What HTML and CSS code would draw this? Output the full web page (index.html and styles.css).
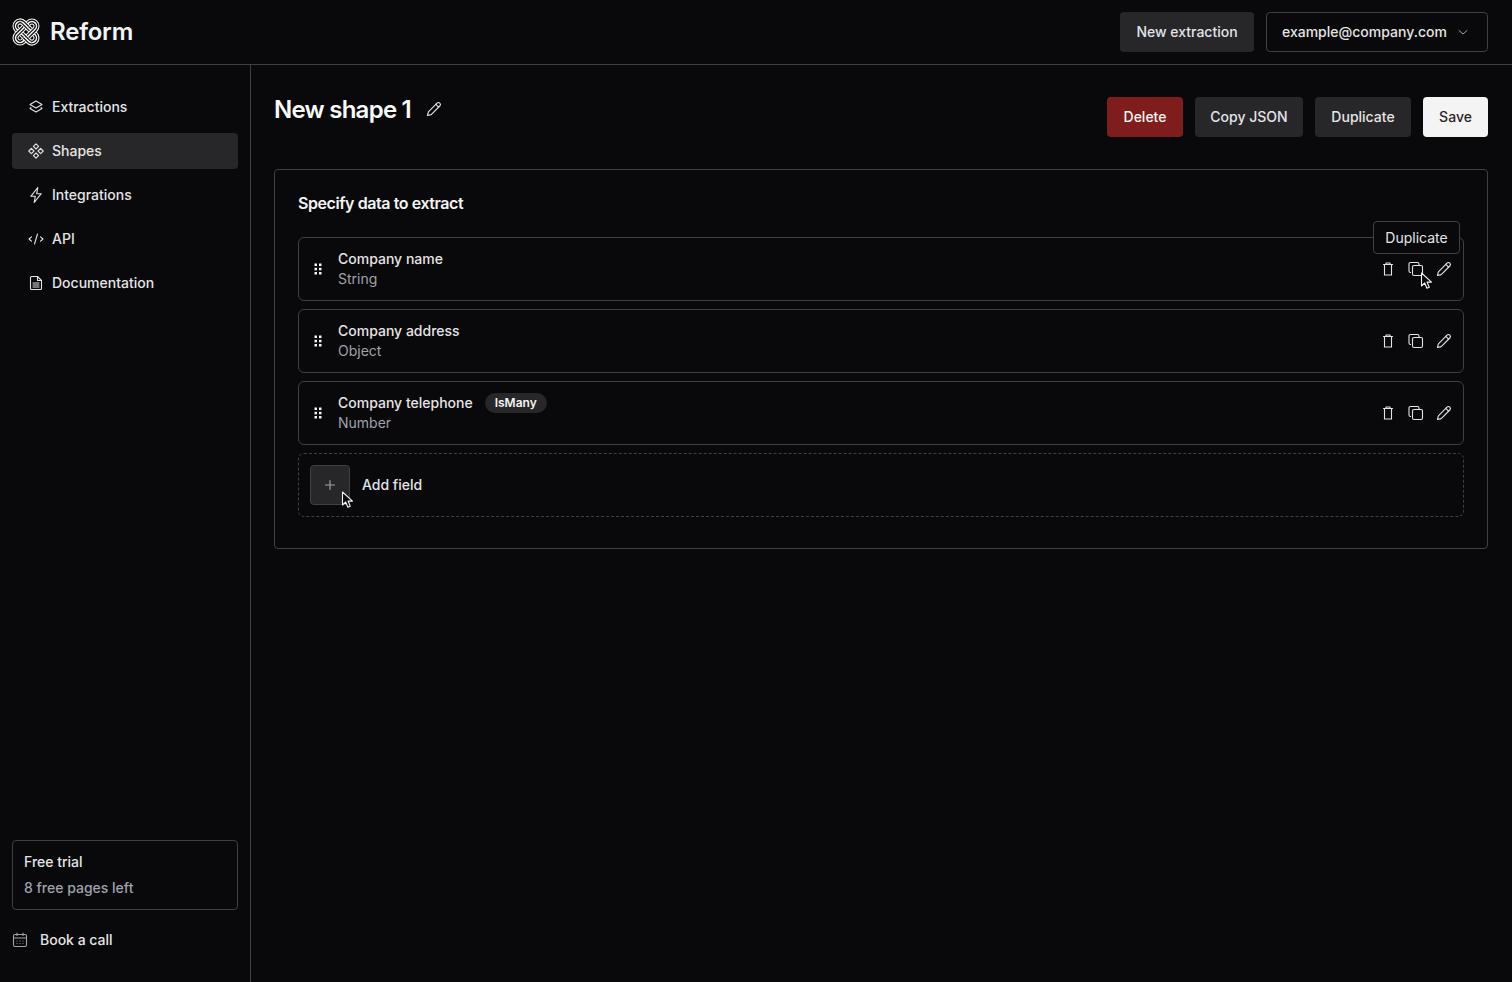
FILE: index.html
```html
<!DOCTYPE html>
<html lang="en">
<head>
<meta charset="utf-8">
<title>Reform</title>
<link rel="stylesheet" href="styles.css">
</head>
<body>
<header class="topbar">
  <div class="brand">
    <svg class="logo" viewBox="1 1 26 26" fill="none">
      <defs>
        <path id="loop-a" d="M11.500 5.500 22.500 16.500A4.240 4.240 0 0 1 16.500 22.500L5.500 11.500A4.240 4.240 0 0 1 11.500 5.500Z"/>
        <path id="loop-b" d="M16.500 5.500 5.500 16.500A4.240 4.240 0 0 0 11.500 22.500L22.500 11.500A4.240 4.240 0 0 0 16.500 5.500Z"/>
        <g id="band-a"><use href="#loop-a" class="band-1"/><use href="#loop-a" class="band-2"/><use href="#loop-a" class="band-3"/></g>
        <g id="band-b"><use href="#loop-b" class="band-1"/><use href="#loop-b" class="band-2"/><use href="#loop-b" class="band-3"/></g>
        <clipPath id="weave"><path d="M7 0H21L14 14ZM7 28H21L14 14Z"/></clipPath>
      </defs>
      <use href="#band-a"/>
      <use href="#band-b"/>
      <g clip-path="url(#weave)"><use href="#band-a"/></g>
    </svg>
    <span class="brand-name">Reform</span>
  </div>
  <div class="top-actions">
    <button class="btn btn-muted btn-new">New extraction</button>
    <button class="account">
      <span>example@company.com</span>
      <svg class="chevron" viewBox="0 0 16 16" fill="none" stroke="#a1a1aa" stroke-width="1" stroke-linecap="round" stroke-linejoin="round"><path d="m4 6.500 4 3.500 4-3.500"/></svg>
    </button>
  </div>
</header>

<div class="shell">
  <aside class="sidebar">
    <nav class="nav">
      <a class="nav-item">
        <svg class="nav-icon" viewBox="0 0 16 16" fill="none" stroke="currentColor" stroke-width="1.100" stroke-linejoin="round"><path d="M8 2 14 5.500 8 9 2 5.500Z"/><path d="M3.300 8.500 2 9.500 8 13l6-3.500-1.300-1"/></svg>
        <span>Extractions</span>
      </a>
      <a class="nav-item nav-active">
        <svg class="nav-icon" viewBox="0 0 16 16" fill="none" stroke="currentColor" stroke-width="1.100" stroke-linejoin="round"><path d="M8 .8 10.600 3.400 8 6 5.400 3.400Z"/><path d="M3.400 5.400 6 8 3.400 10.600.8 8Z"/><path d="M12.600 5.400 15.200 8 12.600 10.600 10 8Z"/><path d="M8 10 10.600 12.600 8 15.200 5.400 12.600Z"/></svg>
        <span>Shapes</span>
      </a>
      <a class="nav-item">
        <svg class="nav-icon" viewBox="0 0 16 16" fill="none" stroke="currentColor" stroke-width="1.100" stroke-linejoin="round"><path d="M9.800 .5 2.800 9.300h4.500l-1.100 6.200 7-8.800H8.700Z"/></svg>
        <span>Integrations</span>
      </a>
      <a class="nav-item">
        <svg class="nav-icon" viewBox="0 0 16 16" fill="none" stroke="currentColor" stroke-width="1.100" stroke-linecap="round" stroke-linejoin="round"><path d="M3.500 5.800 1 8 3.500 10.200"/><path d="M12.500 5.800 15 8 12.500 10.200"/><path d="M9.500 3 6.500 13"/></svg>
        <span>API</span>
      </a>
      <a class="nav-item">
        <svg class="nav-icon" viewBox="0 0 16 16" fill="none" stroke="currentColor" stroke-width="1.100" stroke-linecap="round" stroke-linejoin="round"><path d="M9.500 1.500H3.500a1 1 0 0 0-1 1v11a1 1 0 0 0 1 1h9a1 1 0 0 0 1-1V5.500Z"/><path d="M9.500 1.500v4h4"/><path d="M5 8h6M5 10h6M5 12h6"/></svg>
        <span>Documentation</span>
      </a>
    </nav>
    <div class="side-bottom">
      <div class="trial">
        <div class="trial-title">Free trial</div>
        <div class="trial-sub">8 free pages left</div>
      </div>
      <a class="book">
        <svg class="book-icon" viewBox="0 0 16 16" fill="none" stroke="#a1a1aa" stroke-width="1.100" stroke-linecap="round"><rect x="1.500" y="2.500" width="13" height="12" rx="1.500"/><path d="M1.500 6h13M5 1v2.500M11 1v2.500"/><path d="M5 9h.01M8 9h.01M11 9h.01M5 11.500h.01M8 11.500h.01M11 11.500h.01"/></svg>
        <span>Book a call</span>
      </a>
    </div>
  </aside>

  <main class="main">
    <div class="page-head">
      <div class="title-wrap">
        <h1 class="title">New shape 1</h1>
        <svg class="title-edit" viewBox="0 0 16 16" fill="none" stroke="#e4e4e7" stroke-width="1.100" stroke-linejoin="round" stroke-linecap="round"><path d="M1.500 14.500l.9-3.700L11 2.200a1.700 1.700 0 0 1 2.800 2.800l-8.600 8.600Z"/><path d="M9.800 3.400l2.800 2.800"/></svg>
      </div>
      <div class="page-actions">
        <button class="btn btn-danger">Delete</button>
        <button class="btn btn-muted btn-copy">Copy JSON</button>
        <button class="btn btn-muted btn-dup">Duplicate</button>
        <button class="btn btn-light">Save</button>
      </div>
    </div>

    <section class="card">
      <h2 class="card-title">Specify data to extract</h2>
      <div class="fields">
        <div class="field">
          <svg class="grip" viewBox="0 0 8 12" fill="#f4f4f5"><rect x="0.500" y="0.500" width="2.500" height="2.500"/><rect x="5" y="0.500" width="2.500" height="2.500"/><rect x="0.500" y="4.800" width="2.500" height="2.500"/><rect x="5" y="4.800" width="2.500" height="2.500"/><rect x="0.500" y="9" width="2.500" height="2.500"/><rect x="5" y="9" width="2.500" height="2.500"/></svg>
          <div class="field-text">
            <div class="field-name"><span>Company name</span></div>
            <div class="field-type">String</div>
          </div>
          <div class="field-actions">
            <svg class="act" viewBox="0 0 16 16" fill="none" stroke="#e4e4e7" stroke-width="1.100" stroke-linecap="round" stroke-linejoin="round"><path d="M3.500 3.500h9M6 3.500V2h4v1.500M4.500 3.500v10.500h7V3.500"/></svg>
            <svg class="act" viewBox="0 0 16 16" fill="none" stroke="#e4e4e7" stroke-width="1.100" stroke-linejoin="round"><path d="M3 11.500H2.500a1.500 1.500 0 0 1-1.500-1.500V3a1.500 1.500 0 0 1 1.500-1.500h7A1.500 1.500 0 0 1 11 3v1.500"/><rect x="4.500" y="4.500" width="10" height="10" rx="1.500"/></svg>
            <svg class="act" viewBox="0 0 16 16" fill="none" stroke="#e4e4e7" stroke-width="1.100" stroke-linejoin="round" stroke-linecap="round"><path d="M1.500 14.500l.9-3.700L11 2.200a1.700 1.700 0 0 1 2.800 2.800l-8.600 8.600Z"/><path d="M9.800 3.400l2.800 2.800"/></svg>
          </div>
          <div class="tooltip">Duplicate</div>
          <svg class="cursor cursor-dup" viewBox="0 0 14 18"><path d="M1.500 1v13l3.200-3 2.200 5.200 2.400-1-2.200-5.100h4.400Z" fill="#0b0b0d" stroke="#f4f4f5" stroke-width="1.100" stroke-linejoin="round"/></svg>
        </div>
        <div class="field">
          <svg class="grip" viewBox="0 0 8 12" fill="#f4f4f5"><rect x="0.500" y="0.500" width="2.500" height="2.500"/><rect x="5" y="0.500" width="2.500" height="2.500"/><rect x="0.500" y="4.800" width="2.500" height="2.500"/><rect x="5" y="4.800" width="2.500" height="2.500"/><rect x="0.500" y="9" width="2.500" height="2.500"/><rect x="5" y="9" width="2.500" height="2.500"/></svg>
          <div class="field-text">
            <div class="field-name"><span>Company address</span></div>
            <div class="field-type">Object</div>
          </div>
          <div class="field-actions">
            <svg class="act" viewBox="0 0 16 16" fill="none" stroke="#e4e4e7" stroke-width="1.100" stroke-linecap="round" stroke-linejoin="round"><path d="M3.500 3.500h9M6 3.500V2h4v1.500M4.500 3.500v10.500h7V3.500"/></svg>
            <svg class="act" viewBox="0 0 16 16" fill="none" stroke="#e4e4e7" stroke-width="1.100" stroke-linejoin="round"><path d="M3 11.500H2.500a1.500 1.500 0 0 1-1.500-1.500V3a1.500 1.500 0 0 1 1.500-1.500h7A1.500 1.500 0 0 1 11 3v1.500"/><rect x="4.500" y="4.500" width="10" height="10" rx="1.500"/></svg>
            <svg class="act" viewBox="0 0 16 16" fill="none" stroke="#e4e4e7" stroke-width="1.100" stroke-linejoin="round" stroke-linecap="round"><path d="M1.500 14.500l.9-3.700L11 2.200a1.700 1.700 0 0 1 2.800 2.800l-8.600 8.600Z"/><path d="M9.800 3.400l2.800 2.800"/></svg>
          </div>
        </div>
        <div class="field">
          <svg class="grip" viewBox="0 0 8 12" fill="#f4f4f5"><rect x="0.500" y="0.500" width="2.500" height="2.500"/><rect x="5" y="0.500" width="2.500" height="2.500"/><rect x="0.500" y="4.800" width="2.500" height="2.500"/><rect x="5" y="4.800" width="2.500" height="2.500"/><rect x="0.500" y="9" width="2.500" height="2.500"/><rect x="5" y="9" width="2.500" height="2.500"/></svg>
          <div class="field-text">
            <div class="field-name"><span>Company telephone</span><span class="badge">IsMany</span></div>
            <div class="field-type">Number</div>
          </div>
          <div class="field-actions">
            <svg class="act" viewBox="0 0 16 16" fill="none" stroke="#e4e4e7" stroke-width="1.100" stroke-linecap="round" stroke-linejoin="round"><path d="M3.500 3.500h9M6 3.500V2h4v1.500M4.500 3.500v10.500h7V3.500"/></svg>
            <svg class="act" viewBox="0 0 16 16" fill="none" stroke="#e4e4e7" stroke-width="1.100" stroke-linejoin="round"><path d="M3 11.500H2.500a1.500 1.500 0 0 1-1.500-1.500V3a1.500 1.500 0 0 1 1.500-1.500h7A1.500 1.500 0 0 1 11 3v1.500"/><rect x="4.500" y="4.500" width="10" height="10" rx="1.500"/></svg>
            <svg class="act" viewBox="0 0 16 16" fill="none" stroke="#e4e4e7" stroke-width="1.100" stroke-linejoin="round" stroke-linecap="round"><path d="M1.500 14.500l.9-3.700L11 2.200a1.700 1.700 0 0 1 2.800 2.800l-8.600 8.600Z"/><path d="M9.800 3.400l2.800 2.800"/></svg>
          </div>
        </div>
        <div class="add-field">
          <span class="add-btn">
            <svg class="plus" viewBox="0 0 12 12" fill="none" stroke="#a1a1aa" stroke-width="1.100" stroke-linecap="round"><path d="M6 1.500v9M1.500 6h9"/></svg>
          </span>
          <span class="add-label">Add field</span>
          <svg class="cursor cursor-add" viewBox="0 0 14 18"><path d="M1.500 1v13l3.200-3 2.200 5.200 2.400-1-2.200-5.100h4.400Z" fill="#0b0b0d" stroke="#f4f4f5" stroke-width="1.100" stroke-linejoin="round"/></svg>
        </div>
      </div>
    </section>
  </main>
</div>
</body>
</html>
```

FILE: styles.css
```css
* {
  box-sizing: border-box;
}

html,
body {
  margin: 0;
  height: 100%;
}

body {
  display: flex;
  flex-direction: column;
  height: 982px;
  overflow: hidden;
  background: #09090b;
  color: #fafafa;
  font-family: Inter, "Liberation Sans", sans-serif;
  font-size: 14px;
  line-height: 20px;
}

.topbar {
  flex: none;
  display: flex;
  align-items: center;
  justify-content: space-between;
  height: 65px;
  padding: 0 24px 1px 12px;
  border-bottom: 1px solid #3f3f46;
}

.brand {
  display: flex;
  align-items: center;
  gap: 10px;
}

.logo {
  width: 28px;
  height: 28px;
  overflow: visible;
}

.band-1 {
  stroke: #f4f4f5;
  stroke-width: 5.600;
}

.band-2 {
  stroke: #09090b;
  stroke-width: 3.600;
}

.band-3 {
  stroke: #f4f4f5;
  stroke-width: 1.400;
}

.brand-name {
  margin-top: 1px;
  font-size: 24px;
  line-height: 32px;
  font-weight: 600;
  letter-spacing: -0.2px;
  color: #f4f4f5;
}

.top-actions {
  display: flex;
  gap: 12px;
}

.btn {
  height: 40px;
  padding: 0;
  width: 65px;
  border: 0;
  border-radius: 4px;
  font: 500 14px/20px Inter, "Liberation Sans", sans-serif;
}

.btn-new {
  width: 134px;
}

.btn-copy {
  width: 108px;
}

.btn-dup {
  width: 96px;
}

.btn-muted {
  background: #27272a;
  color: #e4e4e7;
}

.btn-danger {
  width: 76px;
  background: #7f1d1d;
  color: #f4f4f5;
}

.btn-light {
  background: #f4f4f5;
  color: #27272a;
}

.account {
  display: flex;
  align-items: center;
  justify-content: space-between;
  width: 222px;
  height: 40px;
  padding: 0 16px 0 15px;
  border: 1px solid #3f3f46;
  border-radius: 4px;
  background: transparent;
  color: #e4e4e7;
  font: 500 14px/20px Inter, "Liberation Sans", sans-serif;
}

.chevron {
  width: 16px;
  height: 16px;
}

.shell {
  flex: 1;
  display: flex;
  min-height: 0;
}

.sidebar {
  flex: none;
  display: flex;
  flex-direction: column;
  justify-content: space-between;
  width: 251px;
  padding: 24px 12px 32px;
  border-right: 1px solid #3f3f46;
}

.nav {
  display: flex;
  flex-direction: column;
  gap: 8px;
  width: 226px;
}

.nav-item {
  display: flex;
  align-items: center;
  gap: 8px;
  height: 36px;
  padding: 0 16px;
  border-radius: 4px;
  color: #e4e4e7;
  font-weight: 500;
}

.nav-active {
  background: #27272a;
}

.nav-icon {
  flex: none;
  width: 16px;
  height: 16px;
}

.side-bottom {
  display: flex;
  flex-direction: column;
  gap: 20px;
  width: 226px;
}

.trial {
  height: 70px;
  padding: 11px;
  border: 1px solid #3f3f46;
  border-radius: 4px;
}

.trial-title {
  font-weight: 500;
  color: #e4e4e7;
}

.trial-sub {
  margin-top: 6px;
  color: #a1a1aa;
  font-weight: 500;
}

.book {
  display: flex;
  align-items: center;
  gap: 12px;
  height: 20px;
  color: #e4e4e7;
  font-weight: 500;
}

.book-icon {
  flex: none;
  width: 16px;
  height: 16px;
}

.main {
  flex: 1;
  min-width: 0;
  padding: 32px 24px 24px 23px;
}

.page-head {
  display: flex;
  align-items: flex-start;
  justify-content: space-between;
  margin-bottom: 32px;
}

.title-wrap {
  display: flex;
  align-items: center;
  gap: 15px;
  height: 26px;
}

.title {
  margin: 0;
  font-size: 24px;
  line-height: 24px;
  font-weight: 600;
  letter-spacing: -0.75px;
  color: #fafafa;
}

.title-edit {
  width: 16px;
  height: 16px;
  margin-top: -3px;
}

.page-actions {
  display: flex;
  gap: 12px;
}

.card {
  height: 380px;
  padding: 22px 23px 23px;
  border: 1px solid #3f3f46;
  border-radius: 4px;
}

.card-title {
  margin: 0 0 23px;
  font-size: 16px;
  line-height: 22px;
  font-weight: 600;
  letter-spacing: -0.42px;
  color: #f4f4f5;
}

.fields {
  display: flex;
  flex-direction: column;
  gap: 8px;
}

.field {
  position: relative;
  display: flex;
  align-items: center;
  height: 64px;
  padding: 0 11px 0 15px;
  border: 1px solid #3f3f46;
  border-radius: 6px;
}

.grip {
  flex: none;
  width: 8px;
  height: 12px;
}

.field-text {
  flex: 1;
  margin-left: 16px;
}

.field-name {
  display: flex;
  align-items: center;
  gap: 12px;
  font-weight: 500;
  color: #e4e4e7;
}

.field-type {
  color: #a1a1aa;
  font-weight: 400;
}

.badge {
  display: inline-flex;
  align-items: center;
  height: 20px;
  padding: 0 10px;
  border-radius: 10px;
  background: #27272a;
  font-size: 12px;
  line-height: 16px;
  font-weight: 600;
  color: #f4f4f5;
}

.field-actions {
  display: flex;
  gap: 12px;
}

.act {
  width: 16px;
  height: 16px;
}

.tooltip {
  position: absolute;
  top: -17px;
  right: 3px;
  width: 87px;
  height: 33px;
  padding: 6px 0;
  border: 1px solid #3f3f46;
  border-radius: 4px;
  background: #09090b;
  color: #e4e4e7;
  text-align: center;
  font-weight: 400;
}

.cursor {
  position: absolute;
  width: 14px;
  height: 18px;
}

.cursor-dup {
  top: 34px;
  right: 29px;
}

.cursor-add {
  top: 37px;
  left: 42px;
}

.add-field {
  position: relative;
  display: flex;
  align-items: center;
  gap: 12px;
  height: 64px;
  padding: 0 11px;
  border: 1px dashed #3f3f46;
  border-radius: 6px;
}

.add-btn {
  display: flex;
  align-items: center;
  justify-content: center;
  width: 40px;
  height: 40px;
  border: 1px solid #3f3f46;
  border-radius: 4px;
  background: #27272a;
}

.plus {
  width: 12px;
  height: 12px;
}

.add-label {
  font-weight: 500;
  color: #e4e4e7;
}
```
